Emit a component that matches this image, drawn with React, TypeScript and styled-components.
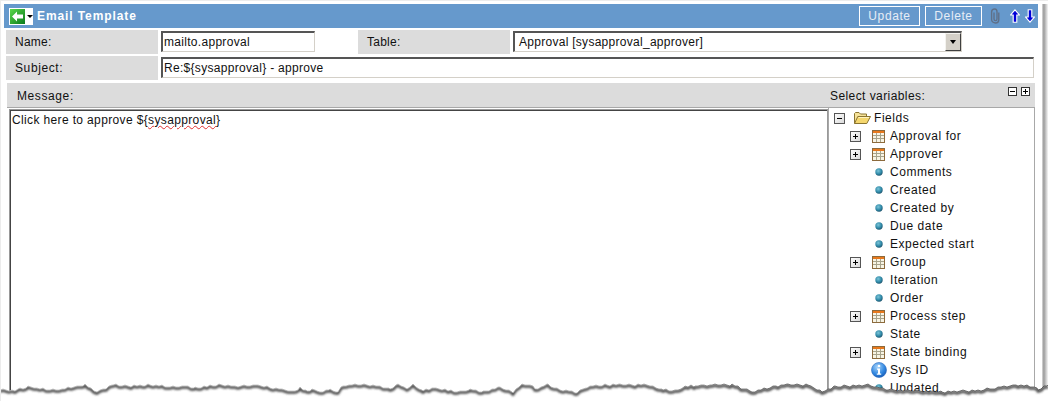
import React from 'react';
import styled, { createGlobalStyle } from 'styled-components';

const Global = createGlobalStyle`
  html, body { margin: 0; padding: 0; background: #fff; }
  * { box-sizing: border-box; }
`;

const Page = styled.div`
  position: relative;
  width: 1048px;
  height: 401px;
  overflow: hidden;
  background: #fff;
  padding: 4px 0 0 4px;
  font: 12px/14px "Liberation Sans", Arial, sans-serif;
  color: #111;
  letter-spacing: 0.25px;
  border-top: 1px solid #ececec;
  border-left: 1px solid #ececec;
  display: flex;
  flex-direction: column;
`;

const Shell = styled.div`
  width: 1034px;
  margin: -1px 0 0 -1px;
  flex: 1;
  min-height: 0;
  display: flex;
  flex-direction: column;
`;

const Header = styled.header`
  flex: none;
  height: 24px;
  background: #6699cc;
  display: flex;
  align-items: center;
  padding: 0 3px 0 5px;
`;

const BackButton = styled.div`
  width: 24px;
  height: 17px;
  background: #fff;
  display: flex;
  align-items: center;
  padding-left: 1px;
  gap: 2px;
`;

const Title = styled.h1`
  margin: 0 0 0 4px;
  flex: 1;
  color: #fff;
  font-size: 12px;
  font-weight: bold;
  letter-spacing: 0.9px;
`;

const HeaderButton = styled.button<{ $w: number }>`
  width: ${p => p.$w}px;
  height: 20px;
  margin-right: 5px;
  padding: 0;
  background: transparent;
  border: 1px solid #fff;
  color: #e6edf6;
  font: inherit;
  letter-spacing: 0.6px;
`;

const IconGroup = styled.div`
  display: flex;
  align-items: center;
  margin-left: 3px;
`;

const Row = styled.div`
  flex: none;
  height: 24px;
  margin: 2px 0 0 2px;
  display: flex;
  align-items: flex-start;
`;

const Label = styled.label<{ $gap?: number; $ls?: number }>`
  width: 152px;
  height: 24px;
  margin-left: ${p => p.$gap ?? 0}px;
  margin-right: 3px;
  padding-left: 9px;
  background: #dcdcdc;
  display: flex;
  align-items: center;
  letter-spacing: ${p => p.$ls ?? 0.25}px;
`;

const Field = styled.input<{ $w: number }>`
  width: ${p => p.$w}px;
  height: 21px;
  margin: 1px 0 0;
  padding: 0 0 0 1px;
  background: #fff;
  color: #111;
  font: inherit;
  letter-spacing: 0.3px;
  outline: none;
  border-style: solid;
  border-width: 2px 1px 1px 2px;
  border-color: #555 #d4d0c8 #d4d0c8 #555;
`;

const SelectBox = styled.div`
  width: 449px;
  height: 21px;
  margin-top: 1px;
  padding: 0 0 0 4px;
  border-style: solid;
  border-width: 2px 1px 1px 2px;
  border-color: #555 #d4d0c8 #d4d0c8 #555;
  display: flex;
  align-items: center;
  justify-content: space-between;
  letter-spacing: 0.28px;
`;

const SelectArrow = styled.span`
  width: 16px;
  height: 18px;
  margin-top: -1px;
  background: #d4d0c8;
  border-style: solid;
  border-width: 1px;
  border-color: #f4f3ef #404040 #404040 #f4f3ef;
  display: flex;
  align-items: center;
  justify-content: center;
`;

const Caret = styled.i`
  display: block;
  width: 0;
  height: 0;
  border-style: solid;
  border-width: 4px 3.5px 0;
  border-color: #000 transparent transparent;
`;

const SmallCaret = styled(Caret)`
  border-width: 3px 3px 0;
`;

const MessageBar = styled.div`
  flex: none;
  width: 1028px;
  height: 25px;
  margin: 3px 0 0 3px;
  background: #dcdcdc;
  border-bottom: 1px solid #a8a8a8;
  display: flex;
  position: relative;
`;

const BarTitle = styled.span`
  flex: 1;
  padding: 4px 0 0 10px;
  line-height: 18px;
  letter-spacing: 0.6px;
`;

const VarTitle = styled.span`
  width: 205px;
  padding-top: 4px;
  line-height: 18px;
  letter-spacing: 0.42px;
`;

const BarTools = styled.div`
  position: absolute;
  top: 4px;
  right: 5px;
  display: flex;
  gap: 4px;
`;

const Workspace = styled.div`
  flex: 1;
  min-height: 0;
  margin-left: 5px;
  display: flex;
`;

const Editor = styled.div`
  width: 819px;
  margin-top: 1px;
  border: 1px solid #999;
  border-bottom: 0;
  box-shadow: inset 1px 1px 0 #444;
  padding: 3px 0 0 2px;
  line-height: 14px;
  letter-spacing: 0.36px;
`;

const Misspelt = styled.span`
  text-decoration: underline wavy #e03030 1px;
  text-underline-offset: 1px;
`;

const Tree = styled.ul`
  width: 207px;
  margin: 0;
  padding: 1px 0 0;
  list-style: none;
  border-left: 1px solid #a8a8a8;
  border-right: 1px solid #a8a8a8;
  overflow: hidden;
  letter-spacing: 0.55px;
`;

const TreeRow = styled.li<{ $root?: boolean }>`
  height: 18px;
  display: flex;
  align-items: center;
  padding-left: ${p => (p.$root ? 5 : 21)}px;
`;

const ToggleSlot = styled.span`
  flex: none;
  width: 20px;
  display: flex;
  align-items: center;
`;

const IconSlot = styled.span`
  flex: none;
  width: 20px;
  padding-right: 3px;
  display: flex;
  justify-content: center;
  align-items: center;
`;

const RootLabel = styled.span`
  margin-left: 3px;
`;

const IconSpacer = styled.span<{ $w: number }>`
  width: ${p => p.$w}px;
`;

const Toggle = ({ plus }: { plus?: boolean }) => (
  <svg width="11" height="11" viewBox="0 0 11 11" shapeRendering="crispEdges">
    <defs>
      <linearGradient id="tg" x1="0" y1="0" x2="1" y2="1">
        <stop offset="0" stopColor="#ffffff" />
        <stop offset="1" stopColor="#d8d8d8" />
      </linearGradient>
    </defs>
    <rect x="0.5" y="0.5" width="10" height="10" fill="url(#tg)" stroke="#555" />
    <rect x="3" y="5" width="5" height="1" fill="#000" />
    {plus && <rect x="5" y="3" width="1" height="5" fill="#000" />}
  </svg>
);

const MiniToggle = ({ plus }: { plus?: boolean }) => (
  <svg width="9" height="9" viewBox="0 0 9 9" shapeRendering="crispEdges">
    <rect x="0.5" y="0.5" width="8" height="8" fill="#fff" stroke="#333" />
    <rect x="2" y="4" width="5" height="1" fill="#000" />
    {plus && <rect x="4" y="2" width="1" height="5" fill="#000" />}
  </svg>
);

const FolderOpen = () => (
  <svg width="17" height="12" viewBox="0 0 17 12">
    <path d="M0.5 11.5V1.5L1.5 0.5H5L6.5 2H12.5V4" fill="#f6e39a" stroke="#8a7430" />
    <path d="M0.5 11.5L3.8 4.5H16.5L12.8 11.5Z" fill="#f5d76e" stroke="#8a7430" strokeLinejoin="round" />
    <path d="M4.5 5.5H15" stroke="#fff3c0" />
  </svg>
);

const TableIcon = () => (
  <svg width="13" height="13" viewBox="0 0 13 13" shapeRendering="crispEdges">
    <rect x="0.5" y="0.5" width="12" height="12" fill="#f8f4e4" stroke="#8c6a3c" />
    <rect x="1" y="1" width="11" height="2" fill="#e8781c" />
    <path d="M1 5.5H12M1 8.5H12M4.5 3V12M8.5 3V12" stroke="#a8a48c" />
  </svg>
);

const Dot = () => (
  <svg width="8" height="8" viewBox="0 0 8 8">
    <defs>
      <radialGradient id="dotg" cx="0.4" cy="0.35" r="0.7">
        <stop offset="0" stopColor="#7cc4d8" />
        <stop offset="0.6" stopColor="#2f8aa8" />
        <stop offset="1" stopColor="#1d4f68" />
      </radialGradient>
    </defs>
    <circle cx="4" cy="4" r="3.7" fill="url(#dotg)" />
  </svg>
);

const InfoIcon = () => (
  <svg width="16" height="16" viewBox="0 0 16 16">
    <defs>
      <radialGradient id="infog" cx="0.4" cy="0.3" r="0.8">
        <stop offset="0" stopColor="#a8d4fa" />
        <stop offset="0.6" stopColor="#2f86e0" />
        <stop offset="1" stopColor="#1450a8" />
      </radialGradient>
    </defs>
    <circle cx="8" cy="8" r="7.5" fill="url(#infog)" stroke="#2a6ac0" strokeWidth="0.6" />
    <circle cx="8" cy="4" r="1.3" fill="#fff" />
    <path d="M6 6.5H9V11.5H10.2V12.8H5.8V11.5H7V7.8H6Z" fill="#fff" />
  </svg>
);

const BackIcon = () => (
  <svg width="15" height="15" viewBox="0 0 15 15">
    <defs>
      <linearGradient id="bg" x1="0" y1="0" x2="1" y2="1">
        <stop offset="0" stopColor="#5ad84a" />
        <stop offset="1" stopColor="#0a7a1c" />
      </linearGradient>
    </defs>
    <rect width="15" height="15" fill="url(#bg)" />
    <path d="M2 7.5L7 2.5V5.5H13V9.5H7V12.5Z" fill="#fff" />
  </svg>
);

const clipPathD =
  'M8.8 4.5V11.5C8.8 13.6 7.4 15 5.5 15C3.6 15 1.6 13.6 1.6 11.5V4C1.6 2.3 3 1 4.8 1C6.6 1 7 2.3 7 4V11C7 12 6.4 12.6 5.5 12.6C4.6 12.6 4 12 4 11V4.5';

const ClipIcon = () => (
  <svg width="11" height="16" viewBox="0 0 11 16" fill="none">
    <path d={clipPathD} stroke="#5f7088" strokeWidth="1.4" />
  </svg>
);

const Arrow = ({ up }: { up?: boolean }) => (
  <svg width="10" height="14" viewBox="0 0 10 14" style={{ transform: up ? undefined : 'scaleY(-1)' }}>
    <path d="M5 0.8L9.4 6H6.8V13.2H3.2V6H0.6Z" fill="#0000d8" stroke="#fff" strokeWidth="1.1" />
  </svg>
);

const Overlay = styled.svg`
  position: absolute;
  left: -1px;
  top: -1px;
  pointer-events: none;
`;

const edge: [number, number][] = [
  [0, 390], [15, 391], [20, 389], [28, 387], [50, 390], [65, 389], [85, 385], [97, 392], [113, 385],
  [125, 386], [145, 386], [150, 385], [170, 387], [185, 386], [195, 388], [222, 385], [235, 387], [255, 385],
  [285, 390], [292, 392], [300, 388], [307, 392], [312, 389], [317, 392], [330, 390], [338, 392], [343, 386],
  [355, 385], [370, 385], [380, 387], [390, 389], [398, 385], [407, 389], [413, 385], [423, 391], [433, 388],
  [457, 392], [470, 390], [483, 392], [500, 388], [513, 392], [522, 385], [530, 385], [535, 389], [548, 385],
  [557, 389], [577, 393], [587, 387], [607, 385], [620, 385], [647, 385], [663, 390], [675, 391], [685, 387],
  [695, 386], [712, 385], [732, 385], [752, 392], [778, 386], [788, 385], [808, 385], [822, 392], [835, 387],
  [868, 385], [888, 390], [908, 391], [942, 392], [975, 391], [995, 388], [1018, 385], [1034, 387], [1038, 390],
  [1048, 385],
];

// The torn edge is serrated: add a small, fixed tooth pattern between the main points.
const toothAt = (x: number) => [0, -1, 0, 0.6, -0.6, 0, -1, 0.4][Math.floor(x / 3) % 8];
const serrated: [number, number][] = [];
for (let i = 0; i < edge.length - 1; i++) {
  const [x0, y0] = edge[i];
  const [x1, y1] = edge[i + 1];
  for (let x = x0; x < x1; x += 3) {
    serrated.push([x, Math.round(y0 + ((y1 - y0) * (x - x0)) / (x1 - x0) + toothAt(x))]);
  }
}
serrated.push(edge[edge.length - 1]);

const edgeLine = serrated.map(([x, y]) => `${x},${y}`).join(' ');
const edgeArea = `0,401 ${edgeLine} 1048,401`;

const Tear = () => (
  <Overlay width="1048" height="401" viewBox="0 0 1048 401">
    <defs>
      <linearGradient id="rs" x1="0" y1="0" x2="1" y2="0">
        <stop offset="0" stopColor="#dcdcdc" />
        <stop offset="0.3" stopColor="#9a9a9a" />
        <stop offset="1" stopColor="#f6f6f6" />
      </linearGradient>
      <linearGradient id="edgeInk" gradientUnits="userSpaceOnUse" x1="0" y1="0" x2="1048" y2="0">
        <stop offset="0" stopColor="#aaa" />
        <stop offset="0.6" stopColor="#999" />
        <stop offset="0.72" stopColor="#333" />
        <stop offset="1" stopColor="#222" />
      </linearGradient>
      <filter id="blur" x="-2%" y="-100%" width="104%" height="300%">
        <feGaussianBlur stdDeviation="1.3" />
      </filter>
      <clipPath id="below">
        <polygon points={edgeArea} />
      </clipPath>
    </defs>
    <rect x="1042" y="4" width="6" height="390" fill="url(#rs)" />
    <polygon points={edgeArea} fill="#fff" />
    <g clipPath="url(#below)">
      <polyline points={edgeLine} fill="none" stroke="#444" strokeWidth="2.6" filter="url(#blur)" transform="translate(0 1.5)" />
    </g>
    <polyline points={edgeLine} fill="none" stroke="url(#edgeInk)" strokeWidth="0.6" />
  </Overlay>
);

type Item = { name: string; kind: 'table' | 'dot' | 'info' };

const items: Item[] = [
  { name: 'Approval for', kind: 'table' },
  { name: 'Approver', kind: 'table' },
  { name: 'Comments', kind: 'dot' },
  { name: 'Created', kind: 'dot' },
  { name: 'Created by', kind: 'dot' },
  { name: 'Due date', kind: 'dot' },
  { name: 'Expected start', kind: 'dot' },
  { name: 'Group', kind: 'table' },
  { name: 'Iteration', kind: 'dot' },
  { name: 'Order', kind: 'dot' },
  { name: 'Process step', kind: 'table' },
  { name: 'State', kind: 'dot' },
  { name: 'State binding', kind: 'table' },
  { name: 'Sys ID', kind: 'info' },
  { name: 'Updated', kind: 'dot' },
];

export default function App() {
  return (
    <Page>
      <Global />
      <Shell>
        <Header>
          <BackButton>
            <BackIcon />
            <SmallCaret />
          </BackButton>
          <Title>Email Template</Title>
          <HeaderButton $w={61}>Update</HeaderButton>
          <HeaderButton $w={57}>Delete</HeaderButton>
          <IconGroup>
            <ClipIcon />
            <IconSpacer $w={9} />
            <Arrow up />
            <IconSpacer $w={5} />
            <Arrow />
          </IconGroup>
        </Header>
        <Row>
          <Label>Name:</Label>
          <Field $w={154} readOnly value="mailto.approval" />
          <Label $gap={43}>Table:</Label>
          <SelectBox>
            <span>Approval [sysapproval_approver]</span>
            <SelectArrow>
              <Caret />
            </SelectArrow>
          </SelectBox>
        </Row>
        <Row>
          <Label $ls={0.6}>Subject:</Label>
          <Field $w={873} readOnly value="Re:${sysapproval} - approve" />
        </Row>
        <MessageBar>
          <BarTitle>Message:</BarTitle>
          <VarTitle>Select variables:</VarTitle>
          <BarTools>
            <MiniToggle />
            <MiniToggle plus />
          </BarTools>
        </MessageBar>
        <Workspace>
          <Editor>
            Click here to approve ${'{'}<Misspelt>sysapproval</Misspelt>{'}'}
          </Editor>
          <Tree>
            <TreeRow $root>
              <ToggleSlot><Toggle /></ToggleSlot>
              <FolderOpen />
              <RootLabel>Fields</RootLabel>
            </TreeRow>
            {items.map(it => (
              <TreeRow key={it.name}>
                <ToggleSlot>{it.kind === 'table' && <Toggle plus />}</ToggleSlot>
                <IconSlot>
                  {it.kind === 'table' && <TableIcon />}
                  {it.kind === 'dot' && <Dot />}
                  {it.kind === 'info' && <InfoIcon />}
                </IconSlot>
                {it.name}
              </TreeRow>
            ))}
          </Tree>
        </Workspace>
      </Shell>
      <Tear />
    </Page>
  );
}
